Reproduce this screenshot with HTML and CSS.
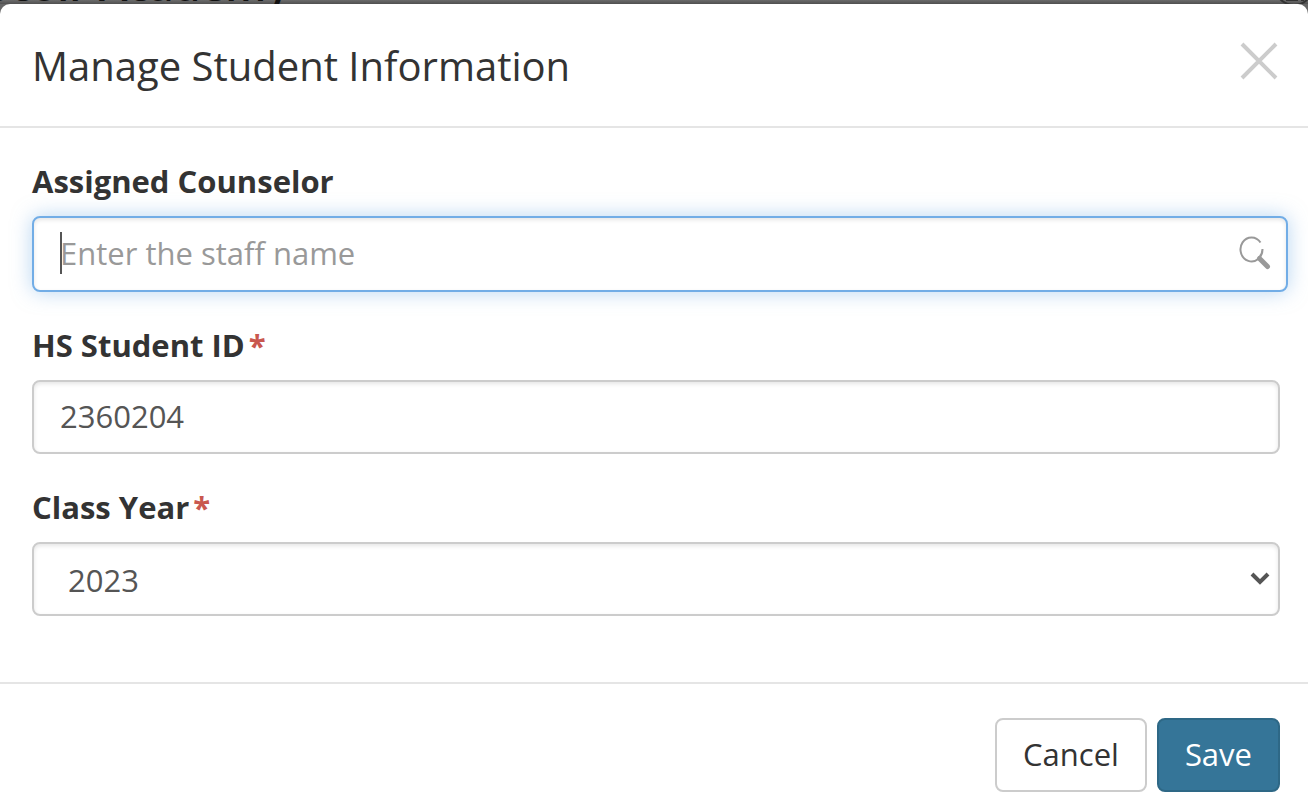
FILE: index.html
```
<!DOCTYPE html>
<html lang="en">
<head>
    <meta charset="UTF-8">
    <meta name="viewport" content="width=device-width, initial-scale=1.0">
    <title>Manage Student Information</title>
    <link rel="stylesheet" href="styles.css">
</head>
<body>
    <div class="backdrop">
        <div class="school-name">Scoir Academy</div>
        <svg class="school-icon" width="36" height="36" viewBox="0 0 36 36" aria-hidden="true">
            <circle cx="22" cy="18" r="19" />
            <path d="M14 32h12M29 32h3" />
        </svg>
    </div>

    <form class="modal" role="dialog" aria-labelledby="modal-title">
        <div class="modal-header">
            <h1 id="modal-title">Manage Student Information</h1>
            <button type="button" class="close-btn" aria-label="Close">
                <svg width="38" height="38" viewBox="0 0 38 38">
                    <path d="M2 2L36 36M36 2L2 36" />
                </svg>
            </button>
        </div>

        <div class="modal-body">
            <div class="field">
                <label for="counselor">Assigned Counselor</label>
                <div class="search-box">
                    <span class="caret"></span>
                    <input type="text" id="counselor" placeholder="Enter the staff name">
                    <svg class="search-icon" width="32" height="34" viewBox="0 0 32 34" aria-hidden="true">
                        <path class="lens" d="M21.5 6.5A11 12 0 1 0 23.5 13Q23.5 18 19.5 22" />
                        <path class="handle" d="M20.5 22.5L28.5 30.5" />
                    </svg>
                </div>
            </div>

            <div class="field">
                <label for="student-id">HS Student ID<span class="required">*</span></label>
                <input type="text" class="control" id="student-id" value="2360204">
            </div>

            <div class="field">
                <label for="class-year">Class Year<span class="required">*</span></label>
                <div class="select-box">
                    <select class="control" id="class-year">
                        <option>2023</option>
                    </select>
                    <svg class="chevron" width="20" height="14" viewBox="0 0 20 14" aria-hidden="true">
                        <path d="M2 2L10 10L18 2" />
                    </svg>
                </div>
            </div>
        </div>

        <div class="modal-footer">
            <button type="button" class="btn">Cancel</button>
            <button type="submit" class="btn btn-primary">Save</button>
        </div>
    </form>
</body>
</html>
```
FILE: styles.css
```
* {
    box-sizing: border-box;
}

body {
    margin: 0;
    min-height: 100vh;
    display: flex;
    flex-direction: column;
    background: #666;
    color: #333;
    font-family: 'Open Sans', 'Noto Sans', sans-serif;
    font-size: 31px;
    line-height: 42px;
}

/* page behind the dialog, only its lower edge stays visible */
.backdrop {
    height: 4px;
    display: flex;
    align-items: flex-end;
    justify-content: space-between;
    overflow: hidden;
    background: linear-gradient(#6b6b6b, #505050);
}

.school-name {
    margin-left: -14px;
    color: #111;
    font-size: 43px;
    font-weight: 600;
    line-height: 38px;
}

.school-icon {
    fill: none;
    stroke: #333;
    stroke-width: 2;
}

.modal {
    flex: 1;
    background: #fff;
    border-radius: 10px 10px 0 0;
}

.modal-header {
    display: flex;
    align-items: flex-start;
    justify-content: space-between;
    padding: 34px 30px 32px 32px;
    border-bottom: 2px solid #e5e5e5;
}

h1 {
    margin: 0;
    font-size: 40px;
    font-weight: 400;
    line-height: 56px;
}

.close-btn {
    display: flex;
    margin-top: 4px;
    padding: 0;
    border: none;
    background: none;
    cursor: pointer;
}

.close-btn svg {
    fill: none;
    stroke: #ccc;
    stroke-width: 4;
}

.modal-body {
    padding: 32px 28px 66px 32px;
}

.field {
    margin-bottom: 32px;
}

.field:last-child {
    margin-bottom: 0;
}

label {
    display: block;
    margin-bottom: 14px;
    font-weight: 700;
}

.required {
    margin-left: 4px;
    color: #c9584f;
}

.control,
.search-box {
    width: 100%;
    height: 74px;
    border: 2px solid #ccc;
    border-radius: 8px;
    background: #fff;
    box-shadow: inset 0 2px 4px rgba(0, 0, 0, 0.1);
    color: #555;
    font: inherit;
}

.control {
    display: block;
    padding: 0 26px 2px;
    outline: none;
}

.search-box {
    position: relative;
    display: flex;
    align-items: center;
    width: calc(100% + 8px);
    height: 76px;
    padding: 0 15px 2px 26px;
    border-color: #72ade6;
    box-shadow: inset 0 2px 4px rgba(0, 0, 0, 0.1), 0 0 20px rgba(114, 173, 230, 0.5);
}

.search-box input {
    flex: 1;
    min-width: 0;
    padding: 0;
    border: none;
    outline: none;
    background: none;
    color: #555;
    font: inherit;
}

.search-box input::placeholder {
    color: #999;
    opacity: 1;
}

.caret {
    position: absolute;
    left: 26px;
    width: 2px;
    height: 42px;
    background: #555;
}

.search-icon {
    fill: none;
    stroke: #999;
}

.lens {
    stroke-width: 2;
}

.handle {
    stroke-width: 5;
    stroke-linecap: round;
}

.select-box {
    position: relative;
}

.select-box .control {
    padding: 2px 34px 0;
    appearance: none;
}

.chevron {
    position: absolute;
    top: 30px;
    right: 10px;
    fill: none;
    stroke: #555;
    stroke-width: 4;
    pointer-events: none;
}

.modal-footer {
    display: flex;
    justify-content: flex-end;
    gap: 10px;
    padding: 34px 28px 16px;
    border-top: 2px solid #e5e5e5;
}

.btn {
    height: 74px;
    padding: 0 26px 2px;
    border: 2px solid #ccc;
    border-radius: 8px;
    background: #fff;
    color: #333;
    font: inherit;
    cursor: pointer;
}

.btn-primary {
    border-color: #2e6886;
    background: #357598;
    color: #fff;
}
```
